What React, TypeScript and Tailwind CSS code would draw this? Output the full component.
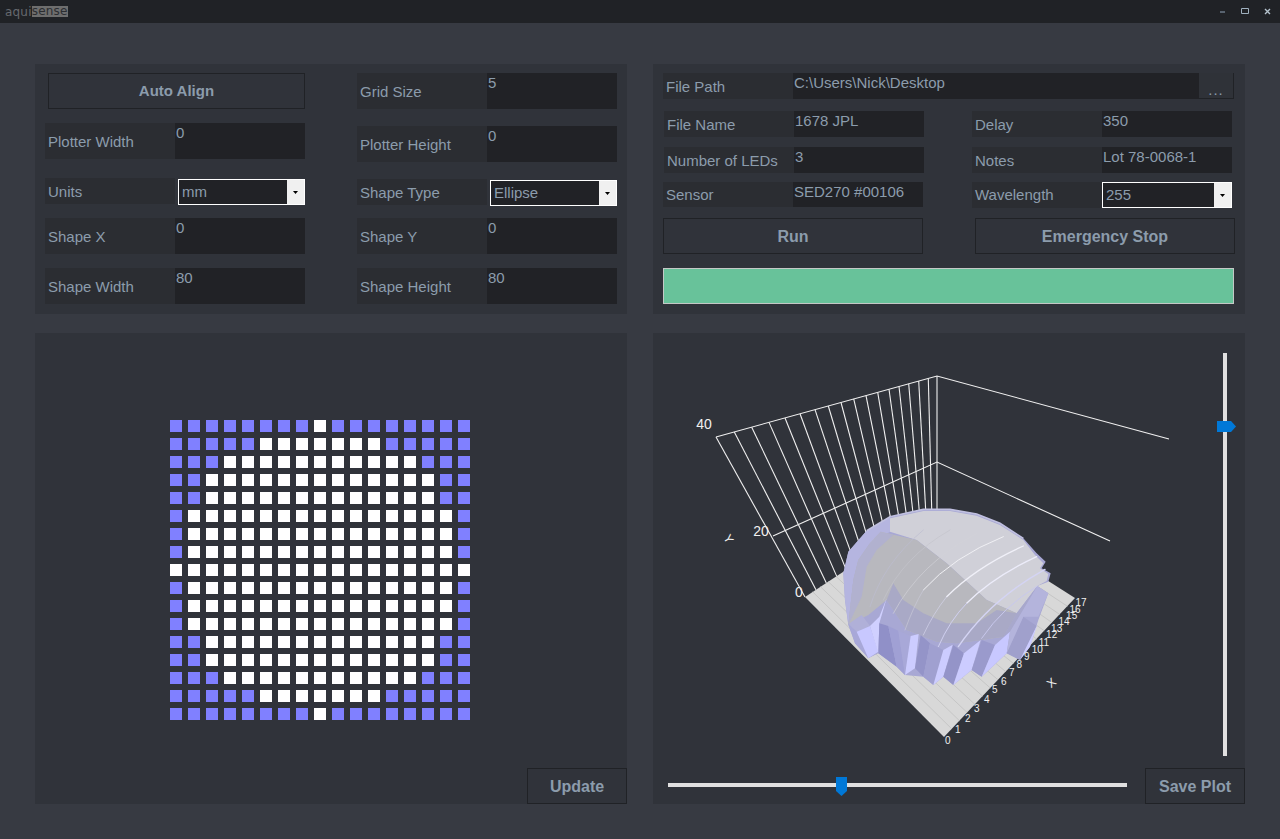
const white = [0, 3, 5, 6, 6, 7, 7, 7, 8, 7, 7, 7, 6, 6, 5, 3, 0];

const FONT = "font-['Liberation_Sans',Arial,sans-serif]";

// x of the wall lines at the top edge, measured off the screenshot
const wallTops = [716, 734.3, 751.7, 769, 785, 800, 815, 828.3, 841, 853.7, 866, 877.7, 889, 899, 908.7, 918.7, 928.3, 937];

const facets: [string, string][] = [
  ["175,372 215,345 240,378 200,395", "#b0b0d8"],
  ["175,372 200,395 235,475 195,430", "#a8a8d8"],
  ["200,395 240,378 265,455 235,475", "#c8c8ff"],
  ["240,378 268,350 290,295 268,370 265,460", "#d0d0ff"],
  ["268,370 295,378 320,500 265,460", "#9090c8"],
  ["295,378 325,392 345,525 320,500", "#a0a0d4"],
  ["325,392 362,408 345,525", "#a8a8d8"],
  ["362,408 386,402 375,505 345,525", "#ccccff"],
  ["392,405 420,430 400,530 375,505", "#9494c8"],
  ["420,430 460,450 430,555 400,530", "#a0a0d0"],
  ["460,450 488,434 460,530 430,555", "#ccccff"],
  ["490,435 522,460 490,555 460,530", "#9494c8"],
  ["522,460 572,420 545,510 490,555", "#ccccff"],
  ["575,420 615,435 575,530 545,510", "#9a9acc"],
  ["615,435 660,395 650,460 575,530", "#c8c8ff"],
  ["700,350 740,378 690,480 650,460", "#a0a0cc"],
  ["690,480 740,378 750,350 720,440", "#ccccff"],
  ["660,395 742,258 775,280 745,350 700,350 650,460", "#b4b4dc"],
];

function Field({ label, value, className }: { label: string; value: string; className: string }) {
  return (
    <div className={`flex ${className}`}>
      <div className="w-[130px] bg-[#2b2d32] pl-[3px] flex items-center pt-[2px]">{label}</div>
      <div className="flex-1 bg-[#212226] pl-[1px] leading-[19px]">{value}</div>
    </div>
  );
}

function Select({ label, value, className }: { label: string; value: string; className: string }) {
  return (
    <div className={`flex h-[26px] ${className}`}>
      <div className="w-[130px] bg-[#2b2d32] pl-[3px] flex items-center pt-[3px]">{label}</div>
      <div className="ml-[3px] flex-1 h-[26px] border border-white bg-[#212226] flex mt-[1px]">
        <div className="flex-1 pl-[3px] flex items-center">{value}</div>
        <div className="w-[17px] bg-[#f0f0f0] flex items-center justify-center">
          <svg width="5" height="3" viewBox="0 0 5 3">
            <path d="M0 0h5L2.5 3z" fill="#000" />
          </svg>
        </div>
      </div>
    </div>
  );
}

function Button({ text, className }: { text: string; className: string }) {
  return (
    <div className={`h-[36px] border border-[#202226] flex items-center justify-center font-bold pt-[1px] ${className}`}>
      {text}
    </div>
  );
}

function Chart() {
  const tickText = [
    [473, 722], [503, 690], [533, 657], [560, 627], [590, 600], [614, 570],
    [641, 545], [665, 519], [688, 495], [710, 471], [742, 450], [762, 427],
    [785, 405], [800, 385], [822, 365], [845, 348], [855, 328], [873, 308],
  ];
  return (
    <svg width="560" height="435" viewBox="653 333 560 435" className="block">
      {/* back walls */}
      <g stroke="#f0f0f0" strokeWidth="1.1" fill="none">
        <path d="M716 437L937 376L1169 439" />
        <path d="M773 536L937 462L1110 541" />
        {wallTops.map((x, i) => {
          const t = (x - 716) / 221;
          return <line key={i} x1={x} y1={437 - 61 * t} x2={805 + 132 * t} y2={597 - 87 * t} />;
        })}
      </g>
      {/* floor */}
      <polygon points="805,597 937,510 1075,598 944,737" fill="#d8d8d8" />
      <g stroke="#c6c6c6" strokeWidth="1">
        {Array.from({ length: 16 }).map((_, i) => {
          const t = (i + 1) / 17;
          return <line key={i} x1={944 + 131 * t} y1={737 - 139 * t} x2={805 + 132 * t} y2={597 - 87 * t} />;
        })}
      </g>
      {/* surface, in the units of a 3x crop from 790,500 */}
      <g transform="translate(790 500) scale(0.33333)">
        <path
          d="M160 220L175 155L230 92L300 50L400 28L480 28L560 42L630 70L700 115L740 160L767 185L755 205L782 220L775 245L742 258L775 280L745 360L720 440L690 480L650 460L575 530L545 510L490 555L460 530L430 555L400 530L345 525L320 500L265 460L235 475L195 430L175 375L165 300Z"
          fill="#a8a8d4"
        />
        <path d="M300 55L400 33L480 33L560 47L630 75L700 120L735 165L760 190L750 205L775 222L770 243L742 258L680 340L590 300L470 190L380 120L300 95Z" fill="#d0d0d8" />
        <path d="M160 220L175 155L230 92L300 50L300 95L240 130L205 180L190 240L175 375L165 300Z" fill="#b5b5e0" />
        <path d="M175 375L190 240L205 180L240 130L272 95L380 120L470 190L590 300L680 340L640 410L575 420L500 430L440 425L350 390L290 300L235 345Z" fill="#b8b8be" />
        <path d="M190 240L205 180L240 130L272 95L310 105L260 150L230 200L215 290L175 375Z" fill="#b1b1cf" />
        <path d="M290 300L350 390L440 425L500 430L575 420L640 410L680 340L620 330L560 370L470 370L400 340L340 300L310 250Z" fill="#a9a9c6" />
        <path d="M660 395L742 258L680 340L640 410Z" fill="#a8a8cc" />
        <path d="M230 92L300 50L400 28L480 28L560 42L630 70L700 115" fill="none" stroke="#c0c0e0" strokeWidth="5" />
        {facets.map(([points, fill]) => (
          <polygon key={points} points={points} fill={fill} />
        ))}
        <g fill="none" strokeLinecap="round">
          <path d="M400 270Q490 170 640 110" stroke="#f0f0f4" strokeWidth="3" />
          <path d="M345 390Q370 320 400 270" stroke="#c8c8d8" strokeWidth="2" />
          <path d="M470 290Q560 200 700 138" stroke="#f0f0f8" strokeWidth="4" />
          <path d="M400 405Q430 340 470 290" stroke="#d4d4ec" strokeWidth="2" />
          <path d="M530 310Q610 230 740 170" stroke="#ececfa" strokeWidth="4" />
          <path d="M445 440Q480 360 530 310" stroke="#d0d0f0" strokeWidth="3" />
          <path d="M505 440Q600 300 765 208" stroke="#d4d4f4" strokeWidth="4" />
          <path d="M575 415Q640 320 742 258" stroke="#c8c8ec" strokeWidth="3" />
          <path d="M280 300Q340 170 480 90" stroke="#c4c4cc" strokeWidth="2" />
          <path d="M240 320Q280 190 400 90" stroke="#bcbcd0" strokeWidth="2" />
          <path d="M310 340Q390 190 560 100" stroke="#d2d2d8" strokeWidth="2" />
        </g>
        <g fill="#f0f0f0" fontSize="30" textAnchor="middle">
          {tickText.map(([x, y], i) => (
            <text key={i} x={x} y={y + 10}>
              {i}
            </text>
          ))}
        </g>
      </g>
      <g fill="#f0f0f0" fontSize="14" textAnchor="middle">
        <text x="704" y="429">40</text>
        <text x="761" y="536">20</text>
        <text x="799" y="597">0</text>
        <text x="0" y="0" fontSize="12" transform="translate(725 541) rotate(60)">Y</text>
        <text x="0" y="0" fontSize="12" transform="translate(1054 686) rotate(-40)">X</text>
      </g>
    </svg>
  );
}

export default function App() {
  return (
    <div className={`w-[1280px] h-[839px] overflow-hidden bg-[#373a42] text-[#8c9cac] text-[15px] ${FONT}`}>
      {/* title bar */}
      <div className="h-[23px] bg-[#202226] flex items-center pl-[5px]">
        <span className="font-['DejaVu_Sans',sans-serif] text-[12px] tracking-[0.2px] text-[#66696e]">aqui</span>
        <span className="font-['DejaVu_Sans',sans-serif] text-[12px] tracking-[0.2px] leading-[11px] h-[11px] bg-[#6e6e6e] text-[#2b2d31]">
          sense
        </span>
        <div className="ml-auto flex items-center pr-[9px] gap-[15px]">
          <svg width="7" height="7" viewBox="0 0 7 7">
            <path d="M1 4h5" stroke="#8fa3b8" strokeWidth="1" />
          </svg>
          <svg width="8" height="7" viewBox="0 0 8 7">
            <path d="M.5.5h7v5h-7z" fill="none" stroke="#9fb0be" strokeWidth="1" />
          </svg>
          <svg width="7" height="7" viewBox="0 0 7 7">
            <path d="M1 1l5 5M6 1l-5 5" stroke="#b4c2cc" strokeWidth="1.4" />
          </svg>
        </div>
      </div>

      {/* top row */}
      <div className="flex pl-[35px] pt-[41px] gap-[26px]">
        <div className="w-[592px] h-[250px] bg-[#30333a] pl-[10px] pt-[9px] flex">
          <div className="w-[260px] flex flex-col">
            <Button text="Auto Align" className="ml-[3px]" />
            <Field label="Plotter Width" value="0" className="h-[36px] mt-[14px]" />
            <Select label="Units" value="mm" className="mt-[19px]" />
            <Field label="Shape X" value="0" className="h-[36px] mt-[14px]" />
            <Field label="Shape Width" value="80" className="h-[36px] mt-[14px]" />
          </div>
          <div className="w-[260px] ml-[52px] flex flex-col">
            <Field label="Grid Size" value="5" className="h-[36px]" />
            <Field label="Plotter Height" value="0" className="h-[36px] mt-[17px]" />
            <Select label="Shape Type" value="Ellipse" className="mt-[17px]" />
            <Field label="Shape Y" value="0" className="h-[36px] mt-[13px]" />
            <Field label="Shape Height" value="80" className="h-[36px] mt-[14px]" />
          </div>
        </div>

        <div className="w-[592px] h-[250px] bg-[#30333a] pl-[10px] pt-[9px] flex flex-col">
          <div className="flex h-[26px]">
            <div className="w-[130px] bg-[#2b2d32] pl-[3px] flex items-center pt-[2px]">File Path</div>
            <div className="w-[406px] bg-[#212226] pl-[1px] leading-[20px]">C:\Users\Nick\Desktop</div>
            <div className="w-[35px] bg-[#2f3238] border-r border-b border-[#202226] flex items-end justify-center leading-[14px] pb-[1px] tracking-[1px]">
              ...
            </div>
          </div>
          <div className="flex mt-[12px] pl-[1px]">
            <Field label="File Name" value="1678 JPL" className="w-[260px] h-[26px]" />
            <Field label="Delay" value="350" className="w-[260px] h-[26px] ml-[48px]" />
          </div>
          <div className="flex mt-[10px] pl-[1px]">
            <Field label="Number of LEDs" value="3" className="w-[260px] h-[26px]" />
            <Field label="Notes" value="Lot 78-0068-1" className="w-[260px] h-[26px] ml-[48px]" />
          </div>
          <div className="flex mt-[9px]">
            <Field label="Sensor" value="SED270 #00106" className="w-[260px] h-[25px]" />
            <div className="w-[260px] ml-[49px] flex h-[26px]">
              <div className="w-[130px] bg-[#2b2d32] pl-[3px] flex items-center">Wavelength</div>
              <div className="flex-1 border border-white bg-[#212226] flex">
                <div className="flex-1 pl-[3px] flex items-center">255</div>
                <div className="w-[17px] bg-[#f0f0f0] flex items-center justify-center">
                  <svg width="5" height="3" viewBox="0 0 5 3">
                    <path d="M0 0h5L2.5 3z" fill="#000" />
                  </svg>
                </div>
              </div>
            </div>
          </div>
          <div className="flex mt-[10px]">
            <Button text="Run" className="w-[260px] text-[16px]" />
            <Button text="Emergency Stop" className="w-[260px] ml-[52px] text-[16px]" />
          </div>
          <div className="w-[571px] h-[36px] mt-[14px] bg-[#68c29a] border border-[#c4c8c6]" />
        </div>
      </div>

      {/* bottom row */}
      <div className="flex pl-[35px] pt-[19px] gap-[26px]">
        <div className="w-[592px] h-[471px] bg-[#30333a] flex flex-col">
          <div className="pl-[135px] pt-[87px]">
            <div className="grid grid-cols-[repeat(17,12px)] gap-[6px]">
              {white.map((h, row) =>
                white.map((_, col) => (
                  <div
                    key={`${row}-${col}`}
                    className={`w-[12px] h-[12px] ${Math.abs(col - 8) <= h ? "bg-white" : "bg-[#8080ff]"}`}
                  />
                ))
              )}
            </div>
          </div>
          <Button text="Update" className="w-[100px] ml-auto mt-auto text-[16px]" />
        </div>

        <div className="w-[592px] h-[471px] bg-[#30333a] flex flex-col">
          <div className="flex h-[435px]">
            <Chart />
            <div className="relative w-[4px] h-[403px] mt-[20px] ml-[10px] bg-[#e0e0e0]">
              <svg width="19" height="11" viewBox="0 0 19 11" className="absolute left-[-6px] top-[68px]">
                <path d="M0 0h14l5 5.5-5 5.5H0z" fill="#0078d7" />
              </svg>
            </div>
          </div>
          <div className="flex h-[36px]">
            <div className="relative w-[459px] h-[4px] mt-[15px] ml-[15px] bg-[#e0e0e0]">
              <svg width="11" height="19" viewBox="0 0 11 19" className="absolute left-[168px] top-[-6px]">
                <path d="M0 0h11v14l-5.5 5L0 14z" fill="#0078d7" />
              </svg>
            </div>
            <Button text="Save Plot" className="w-[100px] ml-[18px] text-[16px]" />
          </div>
        </div>
      </div>
    </div>
  );
}
